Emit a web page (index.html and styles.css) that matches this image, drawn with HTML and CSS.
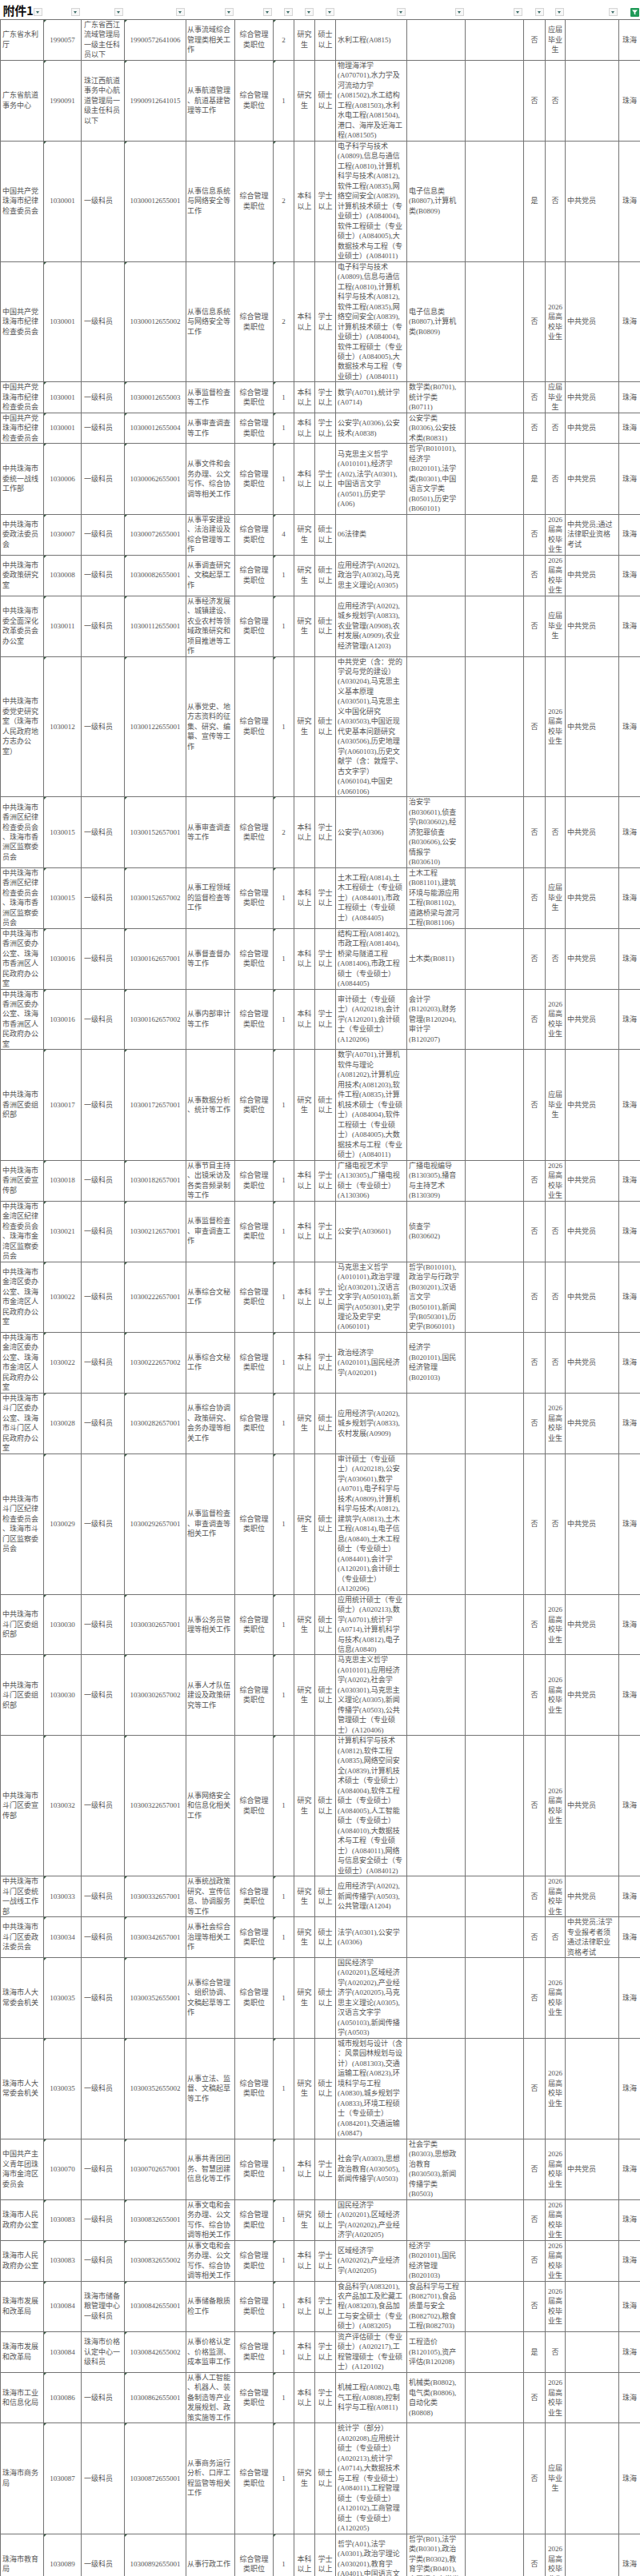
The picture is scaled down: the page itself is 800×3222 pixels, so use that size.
FILE: index.html
```html
<!DOCTYPE html>
<html lang="zh-CN">
<head>
<meta charset="utf-8">
<title>附件1</title>
<link rel="stylesheet" href="styles.css">
</head>
<body>
<table class="sheet">
<colgroup>
<col class="w54"><col class="w47"><col class="w54"><col class="w77"><col class="w61"><col class="w48"><col class="w26"><col class="w26"><col class="w26"><col class="w89"><col class="w73"><col class="w73"><col class="w27"><col class="w25"><col class="w67"><col class="w27">
</colgroup>
<tbody>
<tr class="hdr">
<td><div class="hc first"><span class="title">附件1</span><span class="dd"></span></div></td>
<td><div class="hc"><span class="dd"></span></div></td>
<td><div class="hc"><span class="dd"></span></div></td>
<td><div class="hc"><span class="dd"></span></div></td>
<td><div class="hc"><span class="dd"></span></div></td>
<td><div class="hc"><span class="dd"></span></div></td>
<td><div class="hc"><span class="dd"></span></div></td>
<td><div class="hc"><span class="dd"></span></div></td>
<td><div class="hc"><span class="dd"></span></div></td>
<td><div class="hc"><span class="dd"></span></div></td>
<td><div class="hc"><span class="dd"></span></div></td>
<td><div class="hc"><span class="dd"></span></div></td>
<td><div class="hc"><span class="dd"></span></div></td>
<td><div class="hc"><span class="dd"></span></div></td>
<td><div class="hc"><span class="dd"></span></div></td>
<td><div class="hc"><svg class="flt" viewBox="0 0 11 11" width="11" height="11"><rect width="11" height="11" rx="1" fill="#1f9a57"/><path d="M2 2.5h7L6.3 5.6v3L4.7 7.6V5.6z" fill="#fff"/></svg></div></td>
</tr>

<tr><td>广东省水利<br>厅</td><td>1990057</td><td>广东省西江<br>流域管理局<br>一级主任科<br>员以下</td><td>19900572641006</td><td>从事流域综合<br>管理类相关工<br>作</td><td>综合管理<br>类职位</td><td>2</td><td>研究<br>生</td><td>硕士<br>以上</td><td>水利工程(A0815)</td><td></td><td></td><td>否</td><td>应届<br>毕业<br>生</td><td></td><td>珠海</td></tr>

<tr><td>广东省航道<br>事务中心</td><td>1990091</td><td>珠江西航道<br>事务中心航<br>道管理局一<br>级主任科员<br>以下</td><td>19900912641015</td><td>从事航道管理<br>、航道基建管<br>理等工作</td><td>综合管理<br>类职位</td><td>1</td><td>研究<br>生</td><td>硕士<br>以上</td><td>物理海洋学<br>(A070701),水力学及<br>河流动力学<br>(A081502),水工结构<br>工程(A081503),水利<br>水电工程(A081504),<br>港口、海岸及近海工<br>程(A081505)</td><td></td><td></td><td>否</td><td>否</td><td></td><td>珠海</td></tr>

<tr><td>中国共产党<br>珠海市纪律<br>检查委员会</td><td>1030001</td><td>一级科员</td><td>10300012655001</td><td>从事信息系统<br>与网络安全等<br>工作</td><td>综合管理<br>类职位</td><td>2</td><td>本科<br>以上</td><td>学士<br>以上</td><td>电子科学与技术<br>(A0809),信息与通信<br>工程(A0810),计算机<br>科学与技术(A0812),<br>软件工程(A0835),网<br>络空间安全(A0839),<br>计算机技术硕士（专<br>业硕士）(A084004),<br>软件工程硕士（专业<br>硕士）(A084005),大<br>数据技术与工程（专<br>业硕士）(A084011)</td><td>电子信息类<br>(B0807),计算机<br>类(B0809)</td><td></td><td>是</td><td>否</td><td>中共党员</td><td>珠海</td></tr>

<tr><td>中国共产党<br>珠海市纪律<br>检查委员会</td><td>1030001</td><td>一级科员</td><td>10300012655002</td><td>从事信息系统<br>与网络安全等<br>工作</td><td>综合管理<br>类职位</td><td>2</td><td>本科<br>以上</td><td>学士<br>以上</td><td>电子科学与技术<br>(A0809),信息与通信<br>工程(A0810),计算机<br>科学与技术(A0812),<br>软件工程(A0835),网<br>络空间安全(A0839),<br>计算机技术硕士（专<br>业硕士）(A084004),<br>软件工程硕士（专业<br>硕士）(A084005),大<br>数据技术与工程（专<br>业硕士）(A084011)</td><td>电子信息类<br>(B0807),计算机<br>类(B0809)</td><td></td><td>否</td><td>2026<br>届高<br>校毕<br>业生</td><td>中共党员</td><td>珠海</td></tr>

<tr><td>中国共产党<br>珠海市纪律<br>检查委员会</td><td>1030001</td><td>一级科员</td><td>10300012655003</td><td>从事监督检查<br>等工作</td><td>综合管理<br>类职位</td><td>1</td><td>本科<br>以上</td><td>学士<br>以上</td><td>数学(A0701),统计学<br>(A0714)</td><td>数学类(B0701),<br>统计学类<br>(B0711)</td><td></td><td>否</td><td>应届<br>毕业<br>生</td><td>中共党员</td><td>珠海</td></tr>

<tr><td>中国共产党<br>珠海市纪律<br>检查委员会</td><td>1030001</td><td>一级科员</td><td>10300012655004</td><td>从事审查调查<br>等工作</td><td>综合管理<br>类职位</td><td>1</td><td>本科<br>以上</td><td>学士<br>以上</td><td>公安学(A0306),公安<br>技术(A0838)</td><td>公安学类<br>(B0306),公安技<br>术类(B0831)</td><td></td><td>否</td><td>否</td><td>中共党员</td><td>珠海</td></tr>

<tr><td>中共珠海市<br>委统一战线<br>工作部</td><td>1030006</td><td>一级科员</td><td>10300062655001</td><td>从事文件和会<br>务办理、公文<br>写作、综合协<br>调等相关工作</td><td>综合管理<br>类职位</td><td>1</td><td>本科<br>以上</td><td>学士<br>以上</td><td>马克思主义哲学<br>(A010101),经济学<br>(A02),法学(A0301),<br>中国语言文学<br>(A0501),历史学<br>(A06)</td><td>哲学(B010101),<br>经济学<br>(B020101),法学<br>类(B0301),中国<br>语言文学类<br>(B0501),历史学<br>(B060101)</td><td></td><td>是</td><td>否</td><td>中共党员</td><td>珠海</td></tr>

<tr><td>中共珠海市<br>委政法委员<br>会</td><td>1030007</td><td>一级科员</td><td>10300072655001</td><td>从事平安建设<br>、法治建设及<br>综合管理等工<br>作</td><td>综合管理<br>类职位</td><td>4</td><td>研究<br>生</td><td>硕士<br>以上</td><td>06法律类</td><td></td><td></td><td>否</td><td>2026<br>届高<br>校毕<br>业生</td><td>中共党员;通过<br>法律职业资格<br>考试</td><td>珠海</td></tr>

<tr><td>中共珠海市<br>委政策研究<br>室</td><td>1030008</td><td>一级科员</td><td>10300082655001</td><td>从事调查研究<br>、文稿起草工<br>作</td><td>综合管理<br>类职位</td><td>1</td><td>研究<br>生</td><td>硕士<br>以上</td><td>应用经济学(A0202),<br>政治学(A0302),马克<br>思主义理论(A0305)</td><td></td><td></td><td>否</td><td>2026<br>届高<br>校毕<br>业生</td><td>中共党员</td><td>珠海</td></tr>

<tr><td>中共珠海市<br>委全面深化<br>改革委员会<br>办公室</td><td>1030011</td><td>一级科员</td><td>10300112655001</td><td>从事经济发展<br>、城镇建设、<br>农业农村等领<br>域政策研究和<br>项目推进等工<br>作</td><td>综合管理<br>类职位</td><td>1</td><td>研究<br>生</td><td>硕士<br>以上</td><td>应用经济学(A0202),<br>城乡规划学(A0833),<br>农业管理(A0908),农<br>村发展(A0909),农业<br>经济管理(A1203)</td><td></td><td></td><td>否</td><td>应届<br>毕业<br>生</td><td>中共党员</td><td>珠海</td></tr>

<tr><td>中共珠海市<br>委党史研究<br>室（珠海市<br>人民政府地<br>方志办公<br>室）</td><td>1030012</td><td>一级科员</td><td>10300122655001</td><td>从事党史、地<br>方志资料的征<br>集、研究、编<br>纂、宣传等工<br>作</td><td>综合管理<br>类职位</td><td>1</td><td>研究<br>生</td><td>硕士<br>以上</td><td>中共党史（含：党的<br>学说与党的建设）<br>(A030204),马克思主<br>义基本原理<br>(A030501),马克思主<br>义中国化研究<br>(A030503),中国近现<br>代史基本问题研究<br>(A030506),历史地理<br>学(A060103),历史文<br>献学（含：敦煌学、<br>古文字学）<br>(A060104),中国史<br>(A060106)</td><td></td><td></td><td>否</td><td>2026<br>届高<br>校毕<br>业生</td><td>中共党员</td><td>珠海</td></tr>

<tr><td>中共珠海市<br>香洲区纪律<br>检查委员会<br>、珠海市香<br>洲区监察委<br>员会</td><td>1030015</td><td>一级科员</td><td>10300152657001</td><td>从事审查调查<br>等工作</td><td>综合管理<br>类职位</td><td>2</td><td>本科<br>以上</td><td>学士<br>以上</td><td>公安学(A0306)</td><td>治安学<br>(B030601),侦查<br>学(B030602),经<br>济犯罪侦查<br>(B030606),公安<br>情报学<br>(B030610)</td><td></td><td>否</td><td>否</td><td>中共党员</td><td>珠海</td></tr>

<tr><td>中共珠海市<br>香洲区纪律<br>检查委员会<br>、珠海市香<br>洲区监察委<br>员会</td><td>1030015</td><td>一级科员</td><td>10300152657002</td><td>从事工程领域<br>的监督检查等<br>工作</td><td>综合管理<br>类职位</td><td>1</td><td>本科<br>以上</td><td>学士<br>以上</td><td>土木工程(A0814),土<br>木工程硕士（专业硕<br>士）(A084401),市政<br>工程硕士（专业硕<br>士）(A084405)</td><td>土木工程<br>(B081101),建筑<br>环境与能源应用<br>工程(B081102),<br>道路桥梁与渡河<br>工程(B081106)</td><td></td><td>否</td><td>应届<br>毕业<br>生</td><td>中共党员</td><td>珠海</td></tr>

<tr><td>中共珠海市<br>香洲区委办<br>公室、珠海<br>市香洲区人<br>民政府办公<br>室</td><td>1030016</td><td>一级科员</td><td>10300162657001</td><td>从事督查督办<br>等工作</td><td>综合管理<br>类职位</td><td>1</td><td>本科<br>以上</td><td>学士<br>以上</td><td>结构工程(A081402),<br>市政工程(A081404),<br>桥梁与隧道工程<br>(A081406),市政工程<br>硕士（专业硕士）<br>(A084405)</td><td>土木类(B0811)</td><td></td><td>否</td><td>否</td><td>中共党员</td><td>珠海</td></tr>

<tr><td>中共珠海市<br>香洲区委办<br>公室、珠海<br>市香洲区人<br>民政府办公<br>室</td><td>1030016</td><td>一级科员</td><td>10300162657002</td><td>从事内部审计<br>等工作</td><td>综合管理<br>类职位</td><td>1</td><td>本科<br>以上</td><td>学士<br>以上</td><td>审计硕士（专业硕<br>士）(A020218),会计<br>学(A120201),会计硕<br>士（专业硕士）<br>(A120206)</td><td>会计学<br>(B120203),财务<br>管理(B120204),<br>审计学<br>(B120207)</td><td></td><td>否</td><td>2026<br>届高<br>校毕<br>业生</td><td>中共党员</td><td>珠海</td></tr>

<tr><td>中共珠海市<br>香洲区委组<br>织部</td><td>1030017</td><td>一级科员</td><td>10300172657001</td><td>从事数据分析<br>、统计等工作</td><td>综合管理<br>类职位</td><td>1</td><td>研究<br>生</td><td>硕士<br>以上</td><td>数学(A0701),计算机<br>软件与理论<br>(A081202),计算机应<br>用技术(A081203),软<br>件工程(A0835),计算<br>机技术硕士（专业硕<br>士）(A084004),软件<br>工程硕士（专业硕<br>士）(A084005),大数<br>据技术与工程（专业<br>硕士）(A084011)</td><td></td><td></td><td>否</td><td>应届<br>毕业<br>生</td><td>中共党员</td><td>珠海</td></tr>

<tr><td>中共珠海市<br>香洲区委宣<br>传部</td><td>1030018</td><td>一级科员</td><td>10300182657001</td><td>从事节目主持<br>、出镜采访及<br>各类音频录制<br>等工作</td><td>综合管理<br>类职位</td><td>1</td><td>本科<br>以上</td><td>学士<br>以上</td><td>广播电视艺术学<br>(A130305),广播电视<br>硕士（专业硕士）<br>(A130306)</td><td>广播电视编导<br>(B130305),播音<br>与主持艺术<br>(B130309)</td><td></td><td>否</td><td>2026<br>届高<br>校毕<br>业生</td><td>中共党员</td><td>珠海</td></tr>

<tr><td>中共珠海市<br>金湾区纪律<br>检查委员会<br>、珠海市金<br>湾区监察委<br>员会</td><td>1030021</td><td>一级科员</td><td>10300212657001</td><td>从事监督检查<br>、审查调查工<br>作</td><td>综合管理<br>类职位</td><td>1</td><td>本科<br>以上</td><td>学士<br>以上</td><td>公安学(A030601)</td><td>侦查学<br>(B030602)</td><td></td><td>否</td><td>否</td><td>中共党员</td><td>珠海</td></tr>

<tr><td>中共珠海市<br>金湾区委办<br>公室、珠海<br>市金湾区人<br>民政府办公<br>室</td><td>1030022</td><td>一级科员</td><td>10300222657001</td><td>从事综合文秘<br>工作</td><td>综合管理<br>类职位</td><td>1</td><td>本科<br>以上</td><td>学士<br>以上</td><td>马克思主义哲学<br>(A010101),政治学理<br>论(A030201),汉语言<br>文字学(A050103),新<br>闻学(A050301),史学<br>理论及史学史<br>(A060101)</td><td>哲学(B010101),<br>政治学与行政学<br>(B030201),汉语<br>言文学<br>(B050101),新闻<br>学(B050301),历<br>史学(B060101)</td><td></td><td>否</td><td>否</td><td>中共党员</td><td>珠海</td></tr>

<tr><td>中共珠海市<br>金湾区委办<br>公室、珠海<br>市金湾区人<br>民政府办公<br>室</td><td>1030022</td><td>一级科员</td><td>10300222657002</td><td>从事综合文秘<br>工作</td><td>综合管理<br>类职位</td><td>1</td><td>本科<br>以上</td><td>学士<br>以上</td><td>政治经济学<br>(A020101),国民经济<br>学(A020201)</td><td>经济学<br>(B020101),国民<br>经济管理<br>(B020103)</td><td></td><td>否</td><td>否</td><td>中共党员</td><td>珠海</td></tr>

<tr><td>中共珠海市<br>斗门区委办<br>公室、珠海<br>市斗门区人<br>民政府办公<br>室</td><td>1030028</td><td>一级科员</td><td>10300282657001</td><td>从事综合协调<br>、政策研究、<br>会务办理等相<br>关工作</td><td>综合管理<br>类职位</td><td>1</td><td>研究<br>生</td><td>硕士<br>以上</td><td>应用经济学(A0202),<br>城乡规划学(A0833),<br>农村发展(A0909)</td><td></td><td></td><td>否</td><td>2026<br>届高<br>校毕<br>业生</td><td>中共党员</td><td>珠海</td></tr>

<tr><td>中共珠海市<br>斗门区纪律<br>检查委员会<br>、珠海市斗<br>门区监察委<br>员会</td><td>1030029</td><td>一级科员</td><td>10300292657001</td><td>从事监督检查<br>、审查调查等<br>相关工作</td><td>综合管理<br>类职位</td><td>1</td><td>研究<br>生</td><td>硕士<br>以上</td><td>审计硕士（专业硕<br>士）(A020218),公安<br>学(A030601),数学<br>(A0701),电子科学与<br>技术(A0809),计算机<br>科学与技术(A0812),<br>建筑学(A0813),土木<br>工程(A0814),电子信<br>息(A0840),土木工程<br>硕士（专业硕士）<br>(A084401),会计学<br>(A120201),会计硕士<br>（专业硕士）<br>(A120206)</td><td></td><td></td><td>否</td><td>否</td><td>中共党员</td><td>珠海</td></tr>

<tr><td>中共珠海市<br>斗门区委组<br>织部</td><td>1030030</td><td>一级科员</td><td>10300302657001</td><td>从事公务员管<br>理等相关工作</td><td>综合管理<br>类职位</td><td>1</td><td>研究<br>生</td><td>硕士<br>以上</td><td>应用统计硕士（专业<br>硕士）(A020213),数<br>学(A0701),统计学<br>(A0714),计算机科学<br>与技术(A0812),电子<br>信息(A0840)</td><td></td><td></td><td>否</td><td>2026<br>届高<br>校毕<br>业生</td><td>中共党员</td><td>珠海</td></tr>

<tr><td>中共珠海市<br>斗门区委组<br>织部</td><td>1030030</td><td>一级科员</td><td>10300302657002</td><td>从事人才队伍<br>建设及政策研<br>究等工作</td><td>综合管理<br>类职位</td><td>1</td><td>研究<br>生</td><td>硕士<br>以上</td><td>马克思主义哲学<br>(A010101),应用经济<br>学(A0202),社会学<br>(A030301),马克思主<br>义理论(A0305),新闻<br>传播学(A0503),公共<br>管理硕士（专业硕<br>士）(A120406)</td><td></td><td></td><td>否</td><td>2026<br>届高<br>校毕<br>业生</td><td>中共党员</td><td>珠海</td></tr>

<tr><td>中共珠海市<br>斗门区委宣<br>传部</td><td>1030032</td><td>一级科员</td><td>10300322657001</td><td>从事网络安全<br>和信息化相关<br>工作</td><td>综合管理<br>类职位</td><td>1</td><td>研究<br>生</td><td>硕士<br>以上</td><td>计算机科学与技术<br>(A0812),软件工程<br>(A0835),网络空间安<br>全(A0839),计算机技<br>术硕士（专业硕士）<br>(A084004),软件工程<br>硕士（专业硕士）<br>(A084005),人工智能<br>硕士（专业硕士）<br>(A084010),大数据技<br>术与工程（专业硕<br>士）(A084011),网络<br>与信息安全硕士（专<br>业硕士）(A084012)</td><td></td><td></td><td>否</td><td>2026<br>届高<br>校毕<br>业生</td><td>中共党员</td><td>珠海</td></tr>

<tr><td>中共珠海市<br>斗门区委统<br>一战线工作<br>部</td><td>1030033</td><td>一级科员</td><td>10300332657001</td><td>从事统战政策<br>研究、宣传信<br>息、协调服务<br>等工作</td><td>综合管理<br>类职位</td><td>1</td><td>研究<br>生</td><td>硕士<br>以上</td><td>应用经济学(A0202),<br>新闻传播学(A0503),<br>公共管理(A1204)</td><td></td><td></td><td>否</td><td>2026<br>届高<br>校毕<br>业生</td><td>中共党员</td><td>珠海</td></tr>

<tr><td>中共珠海市<br>斗门区委政<br>法委员会</td><td>1030034</td><td>一级科员</td><td>10300342657001</td><td>从事社会综合<br>治理等相关工<br>作</td><td>综合管理<br>类职位</td><td>1</td><td>研究<br>生</td><td>硕士<br>以上</td><td>法学(A0301),公安学<br>(A0306)</td><td></td><td></td><td>否</td><td>否</td><td>中共党员;法学<br>专业报考者须<br>通过法律职业<br>资格考试</td><td>珠海</td></tr>

<tr><td>珠海市人大<br>常委会机关</td><td>1030035</td><td>一级科员</td><td>10300352655001</td><td>从事综合管理<br>、组织协调、<br>文稿起草等工<br>作</td><td>综合管理<br>类职位</td><td>1</td><td>研究<br>生</td><td>硕士<br>以上</td><td>国民经济学<br>(A020201),区域经济<br>学(A020202),产业经<br>济学(A020205),马克<br>思主义理论(A0305),<br>汉语言文字学<br>(A050103),新闻传播<br>学(A0503)</td><td></td><td></td><td>否</td><td>2026<br>届高<br>校毕<br>业生</td><td></td><td>珠海</td></tr>

<tr><td>珠海市人大<br>常委会机关</td><td>1030035</td><td>一级科员</td><td>10300352655002</td><td>从事立法、监<br>督、文稿起草<br>等工作</td><td>综合管理<br>类职位</td><td>1</td><td>研究<br>生</td><td>硕士<br>以上</td><td>城市规划与设计（含<br>：风景园林规划与设<br>计）(A081303),交通<br>运输工程(A0823),环<br>境科学与工程<br>(A0830),城乡规划学<br>(A0833),环境工程硕<br>士（专业硕士）<br>(A084201),交通运输<br>(A0847)</td><td></td><td></td><td>否</td><td>2026<br>届高<br>校毕<br>业生</td><td></td><td>珠海</td></tr>

<tr><td>中国共产主<br>义青年团珠<br>海市金湾区<br>委员会</td><td>1030070</td><td>一级科员</td><td>10300702657001</td><td>从事共青团团<br>务、智慧团建<br>信息化等工作</td><td>综合管理<br>类职位</td><td>1</td><td>本科<br>以上</td><td>学士<br>以上</td><td>社会学(A0303),思想<br>政治教育(A030505),<br>新闻传播学(A0503)</td><td>社会学类<br>(B0303),思想政<br>治教育<br>(B030503),新闻<br>传播学类<br>(B0503)</td><td></td><td>否</td><td>2026<br>届高<br>校毕<br>业生</td><td>中共党员</td><td>珠海</td></tr>

<tr><td>珠海市人民<br>政府办公室</td><td>1030083</td><td>一级科员</td><td>10300832655001</td><td>从事文电和会<br>务办理、公文<br>写作、综合协<br>调等相关工作</td><td>综合管理<br>类职位</td><td>1</td><td>研究<br>生</td><td>硕士<br>以上</td><td>国民经济学<br>(A020201),区域经济<br>学(A020202),产业经<br>济学(A020205)</td><td></td><td></td><td>否</td><td>2026<br>届高<br>校毕<br>业生</td><td></td><td>珠海</td></tr>

<tr><td>珠海市人民<br>政府办公室</td><td>1030083</td><td>一级科员</td><td>10300832655002</td><td>从事文电和会<br>务办理、公文<br>写作、综合协<br>调等相关工作</td><td>综合管理<br>类职位</td><td>1</td><td>本科<br>以上</td><td>学士<br>以上</td><td>区域经济学<br>(A020202),产业经济<br>学(A020205)</td><td>经济学<br>(B020101),国民<br>经济管理<br>(B020103)</td><td></td><td>否</td><td>2026<br>届高<br>校毕<br>业生</td><td></td><td>珠海</td></tr>

<tr><td>珠海市发展<br>和改革局</td><td>1030084</td><td>珠海市储备<br>粮管理中心<br>一级科员</td><td>10300842655001</td><td>从事储备粮质<br>检工作</td><td>综合管理<br>类职位</td><td>1</td><td>本科<br>以上</td><td>学士<br>以上</td><td>食品科学(A083201),<br>农产品加工及贮藏工<br>程(A083203),食品加<br>工与安全硕士（专业<br>硕士）(A083205)</td><td>食品科学与工程<br>(B082701),食品<br>质量与安全<br>(B082702),粮食<br>工程(B082703)</td><td></td><td>否</td><td>2026<br>届高<br>校毕<br>业生</td><td></td><td>珠海</td></tr>

<tr><td>珠海市发展<br>和改革局</td><td>1030084</td><td>珠海市价格<br>认定中心一<br>级科员</td><td>10300842655002</td><td>从事价格认定<br>、价格监测、<br>成本监审工作</td><td>综合管理<br>类职位</td><td>1</td><td>本科<br>以上</td><td>学士<br>以上</td><td>资产评估硕士（专业<br>硕士）(A020217),工<br>程管理硕士（专业硕<br>士）(A120102)</td><td>工程造价<br>(B120105),资产<br>评估(B120208)</td><td></td><td>是</td><td>否</td><td></td><td>珠海</td></tr>

<tr><td>珠海市工业<br>和信息化局</td><td>1030086</td><td>一级科员</td><td>10300862655001</td><td>从事人工智能<br>、机器人、装<br>备制造等产业<br>发展规划、政<br>策实施等工作</td><td>综合管理<br>类职位</td><td>1</td><td>本科<br>以上</td><td>学士<br>以上</td><td>机械工程(A0802),电<br>气工程(A0808),控制<br>科学与工程(A0811)</td><td>机械类(B0802),<br>电气类(B0806),<br>自动化类<br>(B0808)</td><td></td><td>否</td><td>2026<br>届高<br>校毕<br>业生</td><td></td><td>珠海</td></tr>

<tr><td>珠海市商务<br>局</td><td>1030087</td><td>一级科员</td><td>10300872655001</td><td>从事商务运行<br>分析、口岸工<br>程监管等相关<br>工作</td><td>综合管理<br>类职位</td><td>1</td><td>研究<br>生</td><td>硕士<br>以上</td><td>统计学（部分）<br>(A020208),应用统计<br>硕士（专业硕士）<br>(A020213),统计学<br>(A0714),大数据技术<br>与工程（专业硕士）<br>(A084011),工程管理<br>硕士（专业硕士）<br>(A120102),工商管理<br>硕士（专业硕士）<br>(A120205)</td><td></td><td></td><td>否</td><td>应届<br>毕业<br>生</td><td></td><td>珠海</td></tr>

<tr><td>珠海市教育<br>局</td><td>1030089</td><td>一级科员</td><td>10300892655001</td><td>从事行政工作</td><td>综合管理<br>类职位</td><td>1</td><td>本科<br>以上</td><td>学士<br>以上</td><td>哲学(A01),法学<br>(A0301),政治学理论<br>(A030201),教育学<br>(A0401),中国语言文<br>学(A0501)</td><td>哲学(B01),法学<br>类(B0301),政治<br>学类(B0302),教<br>育学类(B0401),<br>中国语言文学类<br>(B0501)</td><td></td><td>否</td><td>2026<br>届高<br>校毕<br>业生</td><td></td><td>珠海</td></tr>
</tbody>
</table>
</body>
</html>
```

FILE: styles.css
```css
html, body {
  margin: 0;
  padding: 0;
  background: #ffffff;
}

body {
  font-family: "Liberation Serif", "Noto Sans CJK SC", serif;
}

.sheet {
  border-collapse: collapse;
  table-layout: fixed;
  width: 800px;
  font-size: 9px;
  line-height: 12.48px;
  color: #545454;
}

.w54 { width: 54px; }
.w47 { width: 47px; }
.w77 { width: 77px; }
.w61 { width: 61px; }
.w48 { width: 48px; }
.w26 { width: 26px; }
.w89 { width: 89px; }
.w73 { width: 73px; }
.w27 { width: 27px; }
.w25 { width: 25px; }
.w67 { width: 67px; }

.sheet td {
  border: 1px solid #747474;
  padding: 0 2px;
  vertical-align: middle;
  white-space: nowrap;
  overflow: hidden;
  text-align: left;
  position: relative;
}

/* centred columns */
.sheet td:nth-child(2),
.sheet td:nth-child(4),
.sheet td:nth-child(6),
.sheet td:nth-child(7),
.sheet td:nth-child(8),
.sheet td:nth-child(9),
.sheet td:nth-child(13),
.sheet td:nth-child(14),
.sheet td:nth-child(16) {
  text-align: center;
  padding: 0 1px;
}

.sheet td:nth-child(3) {
  padding-left: 3px;
}

.sheet td:nth-child(5) {
  padding-left: 1px;
}

/* spreadsheet "number stored as text" corner marks */
.sheet tr:not(.hdr) td:nth-child(2)::before,
.sheet tr:not(.hdr) td:nth-child(4)::before,
.sheet tr:not(.hdr) td:nth-child(7)::before {
  content: "";
  position: absolute;
  left: 0;
  top: 0;
  border-top: 3px solid #3a5a44;
  border-right: 3px solid transparent;
}

/* header row with filter buttons */
.sheet tr.hdr td {
  border: none;
  height: 22px;
  padding: 0 2px 2px 0;
  vertical-align: bottom;
  position: static;
}

.hc {
  display: flex;
  justify-content: flex-end;
  align-items: flex-end;
  height: 20px;
}

.hc.first {
  justify-content: space-between;
  padding-left: 3px;
}

.title {
  font-family: "Noto Sans CJK SC", "Liberation Sans", sans-serif;
  font-weight: 700;
  font-size: 15px;
  line-height: 18px;
  color: #111111;
  letter-spacing: -0.3px;
}

.dd {
  display: block;
  width: 9px;
  height: 8px;
  margin-bottom: 2px;
  border: 1px solid #d6d6d6;
  background: #f7f7f7;
  position: relative;
}

.dd::after {
  content: "";
  position: absolute;
  left: 2px;
  top: 3px;
  border-top: 3px solid #3e6e6a;
  border-left: 2.5px solid transparent;
  border-right: 2.5px solid transparent;
}

.flt {
  display: block;
  margin: 0 0 1px 0;
}
```
